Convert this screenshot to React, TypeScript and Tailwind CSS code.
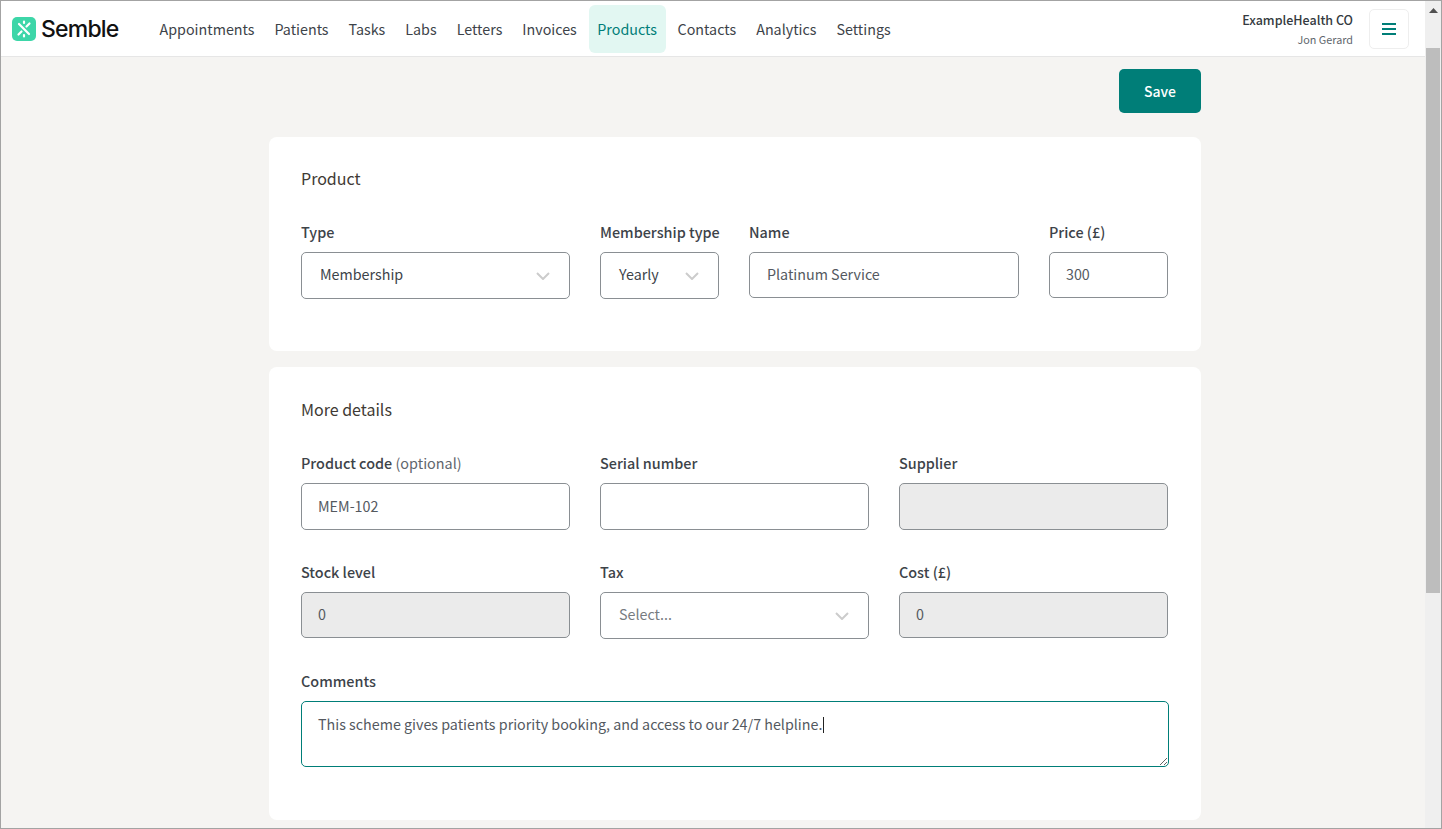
const NAV = ["Appointments", "Patients", "Tasks", "Labs", "Letters", "Invoices", "Products", "Contacts", "Analytics", "Settings"];

function Chevron() {
  return (
    <svg width="14" height="8" viewBox="0 0 14 8" fill="none" stroke="#cccccc" strokeWidth="2">
      <path d="M1 1l6 6 6-6" />
    </svg>
  );
}

function Logo() {
  return (
    <div className="flex items-center gap-[5px]">
      <svg width="24" height="24" viewBox="0 0 24 24">
        <rect width="24" height="24" rx="5" fill="#3dd6a8" />
        <g stroke="#fff" strokeWidth="2.2" strokeLinecap="round">
          <path d="M7 7l10 10M17.5 6.5l-3 3M6.5 17.5l3-3M12 4.5v1.5M12 18v1.5" />
        </g>
      </svg>
      <span className="mt-[1px] font-['Inter',sans-serif] text-[23px] font-medium tracking-[-0.8px] text-[#111111]">Semble</span>
    </div>
  );
}

function Header() {
  return (
    <header className="flex h-[55px] shrink-0 items-center bg-white pl-[11px] pr-[16px]">
      <Logo />
      <nav className="mt-[1px] ml-[31px] flex items-center text-[14.3px]">
        {NAV.map((item) =>
          item === "Products" ? (
            <a key={item} className="mx-[2px] flex h-[48px] items-center rounded-[6px] bg-[#e2f7f2] px-[8.5px] text-[#007e78]">
              {item}
            </a>
          ) : (
            <a key={item} className="flex h-[48px] items-center px-[10px] text-[#3d4349]">
              {item}
            </a>
          ),
        )}
      </nav>
      <div className="ml-auto flex items-center gap-[16px]">
        <div className="flex flex-col items-end">
          <span className="text-[12.5px] leading-[20px] font-medium text-[#343a40]">ExampleHealth CO</span>
          <span className="text-[10.8px] leading-[18px] text-[#5f666d]">Jon Gerard</span>
        </div>
        <button className="flex h-[40px] w-[40px] items-center justify-center rounded-[5px] border border-[#eeeeee] bg-white">
          <svg width="14" height="12" viewBox="0 0 14 12" fill="#007e78">
            <rect width="14" height="2" />
            <rect y="5" width="14" height="2" />
            <rect y="10" width="14" height="2" />
          </svg>
        </button>
      </div>
    </header>
  );
}

function Field({ label, optional, children }: { label: string; optional?: string; children: React.ReactNode }) {
  return (
    <div className="flex flex-col">
      <label className="mb-[9px] text-[14.4px] leading-[22px] font-medium whitespace-nowrap text-[#3d4349]">
        {label}
        {optional && <span className="font-normal text-[#5f666d]"> {optional}</span>}
      </label>
      {children}
    </div>
  );
}

function Input({ value, disabled, h = "h-[47px] pb-[1px]", pl = "pl-[16px]" }: { value?: string; disabled?: boolean; h?: string; pl?: string }) {
  return (
    <div
      className={`flex items-center rounded-[5px] border border-[#8a8f93] pr-[16px] text-[14.3px] text-[#54595f] ${pl} ${h} ${
        disabled ? "bg-[#ebebeb]" : "bg-white"
      }`}
    >
      {value}
    </div>
  );
}

function Select({ value, placeholder }: { value: string; placeholder?: boolean }) {
  return (
    <div className="flex h-[47px] items-center justify-between rounded-[5px] border border-[#8a8f93] bg-white pr-[19px] pl-[18px] text-[14.3px]">
      <span className={`mb-[4px] ${placeholder ? "text-[#777c81]" : "text-[#3d4349]"}`}>{value}</span>
      <Chevron />
    </div>
  );
}

export default function App() {
  return (
    <div className="flex h-screen overflow-hidden border border-[#a3a3a3] bg-[#f5f4f2] font-['Noto_Sans_CJK_SC',sans-serif] text-[16px]">
      <div className="flex min-w-0 flex-1 flex-col">
        <div className="border-b border-[#e6e6e6]">
          <Header />
        </div>
        <main className="ml-[268px] flex w-[932px] flex-col gap-[16px] pt-[12px]">
          <div className="flex justify-end">
            <button className="h-[44px] w-[82px] rounded-[5px] bg-[#007e78] text-[14px] font-medium text-white">Save</button>
          </div>
          <section className="mt-[8px] h-[214px] rounded-[8px] bg-white px-[32px] pt-[28px]">
            <h2 className="text-[16px] leading-[26px] text-[#403a34]">Product</h2>
            <div className="mt-[30px] grid grid-cols-[269px_119px_270px_119px] gap-[30px]">
              <Field label="Type">
                <Select value="Membership" />
              </Field>
              <Field label="Membership type">
                <Select value="Yearly" />
              </Field>
              <Field label="Name">
                <Input value="Platinum Service" h="h-[46px] pb-[3px]" pl="pl-[17px]" />
              </Field>
              <Field label="Price (£)">
                <Input value="300" h="h-[46px] pb-[3px]" />
              </Field>
            </div>
          </section>
          <section className="h-[453px] rounded-[8px] bg-white px-[32px] pt-[29px]">
            <h2 className="text-[16px] leading-[26px] text-[#403a34]">More details</h2>
            <div className="mt-[30px] grid grid-cols-[269px_269px_269px] gap-x-[30px] gap-y-[31px]">
              <Field label="Product code" optional="(optional)">
                <Input value="MEM-102" />
              </Field>
              <Field label="Serial number">
                <Input />
              </Field>
              <Field label="Supplier">
                <Input disabled />
              </Field>
              <Field label="Stock level">
                <Input value="0" disabled h="h-[46px] pb-[3px]" />
              </Field>
              <Field label="Tax">
                <Select value="Select..." placeholder />
              </Field>
              <Field label="Cost (£)">
                <Input value="0" disabled h="h-[46px] pb-[3px]" />
              </Field>
            </div>
            <div className="mt-[31px]">
              <Field label="Comments">
                <div className="relative w-[868px]">
                  <textarea
                    readOnly
                    value="This scheme gives patients priority booking, and access to our 24/7 helpline."
                    className="block h-[66px] w-full resize-y rounded-[5px] border border-[#007e78] bg-white px-[16px] py-[9px] text-[14.3px] leading-[26px] text-[#54595f] outline-none"
                  />
                  <span className="absolute top-[16px] left-[522px] h-[16px] w-px bg-[#222222]" />
                </div>
              </Field>
            </div>
          </section>
        </main>
      </div>
      <div className="flex w-[16px] shrink-0 flex-col items-center bg-[#efefef]">
        <svg className="mt-[7px]" width="9" height="5" viewBox="0 0 9 5" fill="#505050">
          <path d="M4.5 0L9 5H0z" />
        </svg>
        <div className="mt-[35px] h-[545px] w-[14px] bg-[#bdbdbd]" />
      </div>
    </div>
  );
}
